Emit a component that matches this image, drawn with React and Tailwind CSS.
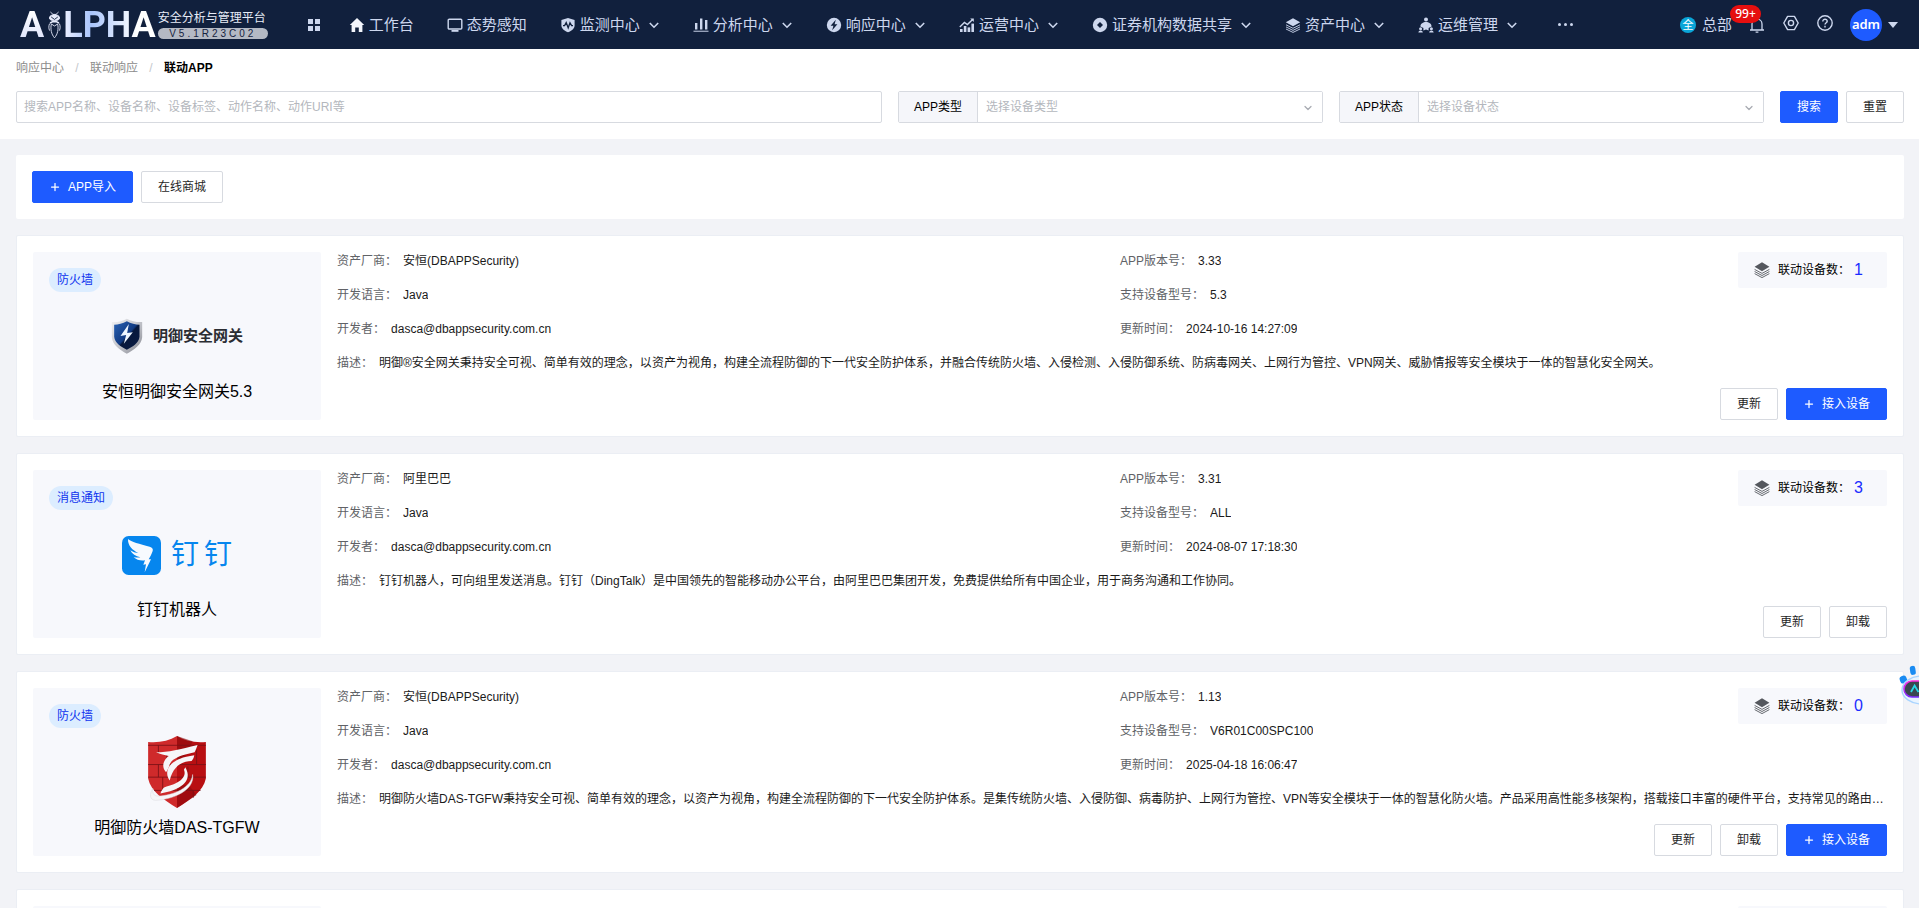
import React from "react";
import { ChevronDown, Plus } from "lucide-react";

const NAV_ICONS = {
  home: (
    <path d="M8 1 L15.2 8 H13.4 V15 H9.8 V10.4 H6.2 V15 H2.6 V8 H0.8 Z" fill="#f3f5fb" />
  ),
  monitor: (
    <g>
      <rect x="1.2" y="2.2" width="13.6" height="9.8" rx="1" fill="none" stroke="#cdd7ee" strokeWidth="1.4" />
      <rect x="4.5" y="13" width="7" height="1.8" fill="#cdd7ee" />
    </g>
  ),
  shield: (
    <g>
      <path d="M8 1 L14.6 3 V8.2 C14.6 11.6 11.8 13.9 8 15.2 C4.2 13.9 1.4 11.6 1.4 8.2 V3 Z" fill="#cdd7ee" />
      <path d="M3 8.6 H4.6 L6.2 5.6 L8.2 10.8 L10 5.8 L11.6 8.6 H13" fill="none" stroke="#11203d" strokeWidth="1.3" />
    </g>
  ),
  bars: (
    <g fill="#cdd7ee">
      <rect x="2" y="6" width="2.4" height="6.5" />
      <rect x="7" y="1.5" width="2.4" height="11" />
      <rect x="12" y="3" width="2.4" height="9.5" />
      <rect x="0.5" y="13.6" width="15" height="1.4" opacity=".7" />
    </g>
  ),
  bolt: (
    <g>
      <circle cx="8" cy="8" r="7.2" fill="#cdd7ee" />
      <path d="M9.8 2.8 L4.6 8.8 H7.4 L6.2 13.2 L11.4 7.2 H8.6 Z" fill="#11203d" />
    </g>
  ),
  growth: (
    <g fill="#cdd7ee">
      <path d="M0.8 10 L5.4 5.4 L8.4 7.6 L13.6 2.4" fill="none" stroke="#cdd7ee" strokeWidth="1.4" />
      <path d="M11.2 1.4 H14.8 V5 Z" />
      <rect x="1" y="12" width="2.6" height="3" />
      <rect x="4.8" y="9" width="2.6" height="6" />
      <rect x="8.6" y="10.4" width="2.6" height="4.6" />
      <rect x="12.4" y="6.6" width="2.6" height="8.4" />
    </g>
  ),
  disc: (
    <g>
      <circle cx="8" cy="8" r="7.2" fill="#cdd7ee" />
      <path d="M8 5 L11 8 L8 11 L5 8 Z" fill="#11203d" />
    </g>
  ),
  layers: (
    <g fill="none" stroke="#cdd7ee" strokeWidth="0.9">
      <path d="M8 1.2 L15.2 5.2 L8 9.2 L0.8 5.2 Z" fill="#cdd7ee" stroke="none" />
      <path d="M1 7.8 L8 11.3 L15 7.8" />
      <path d="M1 9.9 L8 13.4 L15 9.9" />
      <path d="M1 12 L8 15.4 L15 12" />
    </g>
  ),
  team: (
    <g fill="#cdd7ee">
      <circle cx="8" cy="2.6" r="2" />
      <path d="M2.4 9.6 C2.4 3.6 13.6 3.6 13.6 9.6 L10.6 11 V13.4 L8 12.4 L5.4 13.4 V11 Z" />
      <circle cx="2.6" cy="11.8" r="1.5" />
      <circle cx="13.4" cy="11.8" r="1.5" />
      <path d="M0.4 15.6 C0.4 12.8 4.8 12.8 4.8 15.6 Z" />
      <path d="M11.2 15.6 C11.2 12.8 15.6 12.8 15.6 15.6 Z" />
    </g>
  ),
};

const NAV = [
  { icon: "home", label: "工作台" },
  { icon: "monitor", label: "态势感知" },
  { icon: "shield", label: "监测中心", menu: true },
  { icon: "bars", label: "分析中心", menu: true },
  { icon: "bolt", label: "响应中心", menu: true },
  { icon: "growth", label: "运营中心", menu: true },
  { icon: "disc", label: "证券机构数据共享", menu: true },
  { icon: "layers", label: "资产中心", menu: true },
  { icon: "team", label: "运维管理", menu: true },
];

const APPS = [
  {
    tag: "防火墙",
    logo: "gateway",
    name: "安恒明御安全网关5.3",
    vendor: "安恒(DBAPPSecurity)",
    lang: "Java",
    dev: "dasca@dbappsecurity.com.cn",
    version: "3.33",
    model: "5.3",
    time: "2024-10-16 14:27:09",
    desc: "明御®安全网关秉持安全可视、简单有效的理念，以资产为视角，构建全流程防御的下一代安全防护体系，并融合传统防火墙、入侵检测、入侵防御系统、防病毒网关、上网行为管控、VPN网关、威胁情报等安全模块于一体的智慧化安全网关。",
    count: 1,
    actions: ["更新", "接入设备"],
  },
  {
    tag: "消息通知",
    logo: "ding",
    name: "钉钉机器人",
    vendor: "阿里巴巴",
    lang: "Java",
    dev: "dasca@dbappsecurity.com.cn",
    version: "3.31",
    model: "ALL",
    time: "2024-08-07 17:18:30",
    desc: "钉钉机器人，可向组里发送消息。钉钉（DingTalk）是中国领先的智能移动办公平台，由阿里巴巴集团开发，免费提供给所有中国企业，用于商务沟通和工作协同。",
    count: 3,
    actions: ["更新", "卸载"],
  },
  {
    tag: "防火墙",
    logo: "tgfw",
    name: "明御防火墙DAS-TGFW",
    vendor: "安恒(DBAPPSecurity)",
    lang: "Java",
    dev: "dasca@dbappsecurity.com.cn",
    version: "1.13",
    model: "V6R01C00SPC100",
    time: "2025-04-18 16:06:47",
    desc: "明御防火墙DAS-TGFW秉持安全可视、简单有效的理念，以资产为视角，构建全流程防御的下一代安全防护体系。是集传统防火墙、入侵防御、病毒防护、上网行为管控、VPN等安全模块于一体的智慧化防火墙。产品采用高性能多核架构，搭载接口丰富的硬件平台，支持常见的路由协议与部署方式。",
    count: 0,
    actions: ["更新", "卸载", "接入设备"],
  },
  {
    tag: "防火墙",
    logo: "gateway",
    name: "明御安全网关",
    vendor: "安恒(DBAPPSecurity)",
    lang: "Java",
    dev: "dasca@dbappsecurity.com.cn",
    version: "1.0",
    model: "ALL",
    time: "2025-04-18 16:06:47",
    desc: "明御安全网关",
    count: 0,
    actions: ["更新", "接入设备"],
  },
];

function BrandLogo() {
  return (
    <a href="#home" className="flex items-center gap-0.5">
      <span className="flex h-7 items-center font-[Roboto,sans-serif] text-[36px] font-bold leading-7">
        <span className="bg-linear-to-b from-white to-[#dfe4fb] bg-clip-text text-transparent">A</span>
        <svg className="ml-1 mr-0.5 h-7 w-[13px]" viewBox="0 0 13 28" fill="none" stroke="#e6eafa" strokeWidth="0.9">
          <path d="M2.4 1 L5 3.4 H8 L10.6 1" />
          <path d="M1.4 7 C1.4 2.6 11.6 2.6 11.6 7 C11.6 10.6 1.4 10.6 1.4 7 Z" fill="#e6eafa" />
          <path d="M3.2 6 L6.5 8.4 L9.8 6" stroke="#11203d" />
          <path d="M2 12 L4.4 10.8 H8.6 L11 12" strokeWidth="1.4" />
          <path d="M3.4 13 C2.2 18 3.4 23.4 6.5 26.8 C9.6 23.4 10.8 18 9.6 13 L6.5 15 Z" />
          <path d="M1.6 12.6 C0.6 15 0.6 17.4 1.6 19.6 M11.4 12.6 C12.4 15 12.4 17.4 11.4 19.6" />
        </svg>
        <span className="bg-linear-to-r from-[#eef0ff] via-[#a9c4fb] via-30% to-white to-80% bg-clip-text text-transparent">
          LPHA
        </span>
      </span>
      <span className="flex w-[110px] flex-col gap-0.5">
        <span className="whitespace-nowrap text-xs leading-[15px] text-[#e8ecf8]">安全分析与管理平台</span>
        <span className="rounded-full bg-[#b4b9c4] text-center text-[10px] leading-[11px] tracking-[3px] text-[#16233f]">
          V5.1R23C02
        </span>
      </span>
    </a>
  );
}

function Header() {
  return (
    <header className="flex h-[49px] shrink-0 items-center bg-[#11203d] px-5 text-[#cdd7ee]">
      <BrandLogo />
      <button type="button" aria-label="全部应用" className="ml-10">
        <svg className="h-3 w-3" viewBox="0 0 12 12" fill="#cdd7ee">
          <rect width="5" height="5" />
          <rect x="7" width="5" height="5" />
          <rect y="7" width="5" height="5" />
          <rect x="7" y="7" width="5" height="5" />
        </svg>
      </button>
      <nav className="ml-[29px] flex items-center gap-[33px]">
        {NAV.map((item) => (
          <a
            key={item.label}
            href={"#" + item.icon}
            className="flex items-center whitespace-nowrap text-[15px] leading-6"
          >
            <svg className="mr-1 h-4 w-4" viewBox="0 0 16 16">
              {NAV_ICONS[item.icon]}
            </svg>
            {item.label}
            {item.menu && (
              <svg className="ml-2 h-3 w-3" viewBox="0 0 12 12" fill="none" stroke="#cdd7ee" strokeWidth="1.6">
                <path d="M1.8 4 L6 8.2 L10.2 4" />
              </svg>
            )}
          </a>
        ))}
      </nav>
      <button type="button" aria-label="更多" className="ml-10 flex gap-[3px]">
        <span className="h-[3px] w-[3px] rounded-full bg-[#cdd7ee]" />
        <span className="h-[3px] w-[3px] rounded-full bg-[#cdd7ee]" />
        <span className="h-[3px] w-[3px] rounded-full bg-[#cdd7ee]" />
      </button>
      <div className="ml-auto flex items-center">
        <span className="flex h-4 w-4 items-center justify-center rounded-full bg-[#0aa5d8] text-[11px] leading-4 text-white">
          全
        </span>
        <span className="ml-1.5 text-[15px] leading-6">总部</span>
        <button type="button" aria-label="通知" className="relative ml-[17px]">
          <svg className="h-4 w-4" viewBox="0 0 16 16" fill="none" stroke="#cdd7ee" strokeWidth="1.3">
            <path d="M1 13 H15 M3 13 V7 C3 0.6 13 0.6 13 7 V13 M6.6 15.2 H9.4" />
          </svg>
          <span className="absolute -top-3 right-1 flex h-[18px] w-[31px] items-center justify-center rounded-full bg-[#e60f0f] font-['Noto_Sans',sans-serif] text-xs font-medium leading-none text-white">
            99+
          </span>
        </button>
        <button type="button" aria-label="设置" className="ml-[18px]">
          <svg className="-mt-1 h-4 w-4" viewBox="0 0 16 16" fill="none" stroke="#cdd7ee" strokeWidth="1.4">
            <path d="M4.6 1.4 H11.4 L15.2 8 L11.4 14.6 H4.6 L0.8 8 Z" strokeLinejoin="round" />
            <circle cx="8" cy="8" r="2.6" />
          </svg>
        </button>
        <button type="button" aria-label="帮助" className="ml-[18px]">
          <svg className="-mt-1 h-4 w-4" viewBox="0 0 16 16" fill="none" stroke="#cdd7ee" strokeWidth="1.4">
            <circle cx="8" cy="8" r="7.2" />
            <path d="M5.8 6.4 C5.8 3.4 10.4 3.6 10.2 6.4 C10.1 7.8 8 7.8 8 9.6 M8 10.8 V12.4" />
          </svg>
        </button>
        <button type="button" className="ml-[17px] flex items-center gap-[5px]">
          <span className="flex h-8 w-8 items-center justify-center rounded-full bg-[#1e5bff] font-['Noto_Sans',sans-serif] text-[13px] font-semibold leading-none text-white">
            adm
          </span>
          <svg className="h-1.5 w-3" viewBox="0 0 12 6">
            <path d="M1 0 H11 L6 6 Z" fill="#cdd7ee" />
          </svg>
        </button>
      </div>
    </header>
  );
}

function FilterSelect({ id, label, placeholder }) {
  return (
    <div className="flex h-8 rounded-xs border border-[#d7dae0]">
      <label htmlFor={id} className="flex w-[79px] shrink-0 items-center justify-center border-r border-[#d7dae0] bg-[#f5f6fa] text-black">
        {label}
      </label>
      <div className="relative flex-1">
        <select id={id} defaultValue="" className="h-full w-full appearance-none bg-white px-2 text-[#b4b7bd] outline-none">
          <option value="">{placeholder}</option>
        </select>
        <ChevronDown className="pointer-events-none absolute right-2 top-2.5 h-3 w-3 text-[#a8abb2]" strokeWidth={2.5} />
      </div>
    </div>
  );
}

function Button({ primary, plus, children }) {
  return (
    <button
      type="button"
      className={
        primary
          ? "flex h-8 items-center gap-[7px] whitespace-nowrap rounded-xs border border-[#1e5bff] bg-[#1e5bff] px-4 text-white"
          : "flex h-8 items-center whitespace-nowrap rounded-xs border border-[#d7dae0] bg-white px-4 text-[#1f1f1f]"
      }
    >
      {plus && <Plus className="h-3 w-3" strokeWidth={2.5} />}
      {children}
    </button>
  );
}

function GatewayLogo() {
  return (
    <div className="flex items-center gap-2.5">
      <svg className="h-9 w-8" viewBox="33 54 95 108">
        <defs>
          <linearGradient id="gwFill" x1="0" y1="0" x2="1" y2="1">
            <stop offset="0" stopColor="#2a63b4" />
            <stop offset=".5" stopColor="#113a82" />
            <stop offset=".55" stopColor="#07183c" />
            <stop offset="1" stopColor="#0a1c44" />
          </linearGradient>
          <linearGradient id="gwRim" x1="0" y1="0" x2="1" y2="1">
            <stop offset="0" stopColor="#f4f4f6" />
            <stop offset=".6" stopColor="#b9bbc2" />
            <stop offset="1" stopColor="#85878f" />
          </linearGradient>
        </defs>
        <path d="M80 56 C94 64 110 67 126 66 V112 C124 134 102 150 80 161 C58 150 37 134 35 112 V66 C51 67 66 64 80 56 Z" fill="url(#gwRim)" />
        <path d="M80 64 C92 71 106 74 118 74 V110 C116 128 98 140 80 149 C62 140 44 128 42 110 V74 C54 74 68 71 80 64 Z" fill="url(#gwFill)" />
        <path d="M86 72 L61 108 L78 105 L71 131 L98 97 L81 99 Z" fill="#eef6ff" />
      </svg>
      <span className="text-[15px] font-bold leading-6 text-[#2b2d33]">明御安全网关</span>
    </div>
  );
}

function DingLogo() {
  return (
    <div className="flex items-center gap-2.5 pt-0.5">
      <svg className="h-[39px] w-[39px]" viewBox="69 44 117 117">
        <rect x="69" y="44" width="117" height="117" rx="20" fill="#0686ee" />
        <path
          d="M87 53 C96 62 122 68 152 76 C160 78 163 83 161 89 C158 98 153 107 149 114 L156 114 L137 153 L141 129 L133 130 L138 117 C126 119 112 116 104 107 C112 109 119 109 124 108 C110 105 99 98 94 87 C101 92 110 95 118 95 C101 87 86 73 87 53 Z"
          fill="#f7fafe"
        />
      </svg>
      <span className="flex gap-[5px] text-[28px] leading-10 text-[#0686ee]">
        <span>钉</span>
        <span>钉</span>
      </span>
    </div>
  );
}

function TgfwLogo() {
  return (
    <svg className="h-[72px] w-[58px] overflow-visible" viewBox="144 648 174 217">
      <path d="M231 648 C256 663 286 669 318 666 V776 C310 816 270 840 231 865 Z" fill="#b80f12" />
      <path d="M231 648 C206 663 176 669 144 666 V776 C152 816 192 840 231 865 Z" fill="#cf2a2b" />
      <path d="M231 648 L278 664 L262 700 L231 740 Z" fill="#8c0b0e" opacity=".6" />
      <path d="M231 790 L270 800 L290 826 L231 865 Z" fill="#8c0b0e" opacity=".55" />
      <path
        d="M144 676 H318 M144 734 H318 M144 772 H318 M162 812 H302 M175 676 V700 M290 690 V734 M175 734 V772 M264 740 V772 M188 772 V812 M280 812 V834 M200 700 V734"
        stroke="#7a1216"
        strokeWidth="2.6"
        fill="none"
      />
      <path
        d="M168 697 C205 697 240 688 293 675 C290 684 287 691 284 697 C248 704 214 715 208 736 C206 744 202 752 198 757 C184 742 188 722 206 708 C194 706 180 703 168 697 Z"
        fill="#f6f6f8"
      />
      <path d="M283 706 C282 714 279 719 275 723 C246 724 220 738 209 782 C190 756 204 716 283 706 Z" fill="#f6f6f8" />
      <path d="M256 742 C282 786 236 812 181 821 C184 813 188 807 192 803 C236 792 262 774 252 750 Z" fill="#f6f6f8" />
      <path
        d="M278 764 C286 812 216 840 166 842 C148 841 148 822 158 806 C156 820 160 829 174 829 C220 828 276 802 278 764 Z"
        fill="#f6f6f8"
        stroke="#d9d9de"
        strokeWidth="1.5"
      />
    </svg>
  );
}

const LOGOS = { gateway: GatewayLogo, ding: DingLogo, tgfw: TgfwLogo };

function Field({ label, children }) {
  return (
    <div className="flex gap-1.5">
      <dt className="shrink-0 text-[#606266]">{label}：</dt>
      <dd className="truncate text-[#1a1a1a]">{children}</dd>
    </div>
  );
}

function AppCard({ app }) {
  const Logo = LOGOS[app.logo];
  return (
    <article className="flex gap-4 rounded-xs border border-[#ebeef4] bg-white p-4">
      <div className="flex h-[168px] w-72 shrink-0 flex-col items-center gap-2 rounded-xs bg-[#f7f8fc] pt-4">
        <span className="ml-4 self-start rounded-full bg-[#dcedff] px-2 text-xs leading-6 text-[#0f34ee]">{app.tag}</span>
        <div className="flex h-[72px] items-center">
          <Logo />
        </div>
        <h2 className="text-base leading-6 text-black">{app.name}</h2>
      </div>
      <div className="flex min-w-0 flex-1 flex-col leading-[18px]">
        <div className="grid grid-cols-2 gap-4">
          <dl className="flex flex-col gap-4">
            <Field label="资产厂商">{app.vendor}</Field>
            <Field label="开发语言">{app.lang}</Field>
            <Field label="开发者">{app.dev}</Field>
          </dl>
          <div className="flex items-start justify-between">
            <dl className="flex flex-col gap-4">
              <Field label="APP版本号">{app.version}</Field>
              <Field label="支持设备型号">{app.model}</Field>
              <Field label="更新时间">{app.time}</Field>
            </dl>
            <div className="flex h-9 items-center rounded-xs bg-[#f7f8fc] pl-4 pr-6 text-black">
              <svg className="mr-2 h-4 w-4" viewBox="0 0 16 16" fill="none" stroke="#55585e" strokeWidth="0.9">
                <path d="M8 0.2 L15.4 4.7 L8 9.2 L0.6 4.7 Z" fill="#55585e" stroke="none" />
                <path d="M0.6 7.4 L8 11.4 L15.4 7.4" />
                <path d="M0.6 9.5 L8 13.5 L15.4 9.5" />
                <path d="M0.6 11.6 L8 15.6 L15.4 11.6" />
              </svg>
              联动设备数：
              <a href="#devices" className="ml-1 text-base leading-6 text-[#1a2cff]">
                {app.count}
              </a>
            </div>
          </div>
        </div>
        <dl className="mt-4">
          <Field label="描述">{app.desc}</Field>
        </dl>
        <div className="mt-auto flex justify-end gap-2">
          {app.actions.map((name) => {
            const connect = name === "接入设备";
            return (
              <Button key={name} primary={connect} plus={connect}>
                {name}
              </Button>
            );
          })}
        </div>
      </div>
    </article>
  );
}

function Assistant() {
  return (
    <button type="button" aria-label="智能助手" className="absolute right-0 top-[664px] h-11 w-5 overflow-hidden">
      <svg className="h-11 w-5" viewBox="0 0 20 44">
        <defs>
          <linearGradient id="botRing" x1="0" y1="0" x2="0" y2="1">
            <stop offset="0" stopColor="#ff2be0" />
            <stop offset="1" stopColor="#7a2cff" />
          </linearGradient>
        </defs>
        <rect x="11" y="2" width="5.5" height="9" rx="2.6" fill="#1a8bf2" transform="rotate(-8 13 6)" />
        <rect x="1" y="12" width="7" height="7.5" rx="2.8" fill="#1a8bf2" transform="rotate(-20 4 16)" />
        <ellipse cx="23" cy="26" rx="20" ry="14" fill="#e9f4ff" stroke="#a9d4ff" strokeWidth="1.4" />
        <rect x="5" y="17" width="36" height="16" rx="8" fill="#3a4750" stroke="url(#botRing)" strokeWidth="1.6" />
        <path d="M12 28 L15.6 21.6 L19.4 28" fill="none" stroke="#27d8e8" strokeWidth="1.8" />
      </svg>
    </button>
  );
}

export default function App() {
  return (
    <div className="relative flex h-screen flex-col overflow-hidden bg-[#f2f3f7] font-['Liberation_Sans','Noto_Sans_CJK_SC',sans-serif] text-xs">
      <Header />
      <section className="shrink-0 bg-white pb-4 pl-4 pr-[15px] pt-2.5">
        <nav aria-label="面包屑" className="flex leading-[18px] text-[#8c8c8c]">
          <a href="#response">响应中心</a>
          <span className="w-[26px] text-center text-[#c4c7cd]">/</span>
          <a href="#linkage">联动响应</a>
          <span className="w-[26px] text-center text-[#c4c7cd]">/</span>
          <span className="font-bold text-black">联动APP</span>
        </nav>
        <form className="mt-3.5 flex gap-4" onSubmit={(e) => e.preventDefault()}>
          <div className="grid flex-1 grid-cols-4 gap-4">
            <input
              type="text"
              aria-label="搜索"
              placeholder="搜索APP名称、设备名称、设备标签、动作名称、动作URI等"
              className="col-span-2 h-8 rounded-xs border border-[#d7dae0] px-[7px] outline-none placeholder:text-[#b4b7bd]"
            />
            <FilterSelect id="app-type" label="APP类型" placeholder="选择设备类型" />
            <FilterSelect id="app-state" label="APP状态" placeholder="选择设备状态" />
          </div>
          <div className="flex gap-2">
            <Button primary>搜索</Button>
            <Button>重置</Button>
          </div>
        </form>
      </section>
      <main className="flex flex-col gap-4 py-4 pl-4 pr-[15px]">
        <div className="flex gap-2 rounded-xs bg-white p-4">
          <Button primary plus>
            APP导入
          </Button>
          <Button>在线商城</Button>
        </div>
        {APPS.map((app) => (
          <AppCard key={app.name} app={app} />
        ))}
      </main>
      <Assistant />
    </div>
  );
}
